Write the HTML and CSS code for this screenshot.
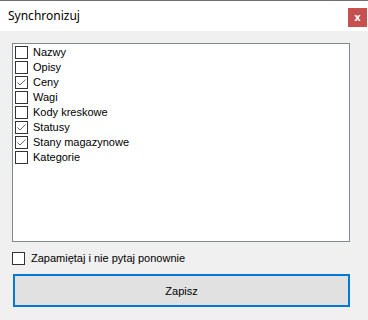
FILE: index.html
```html
<!DOCTYPE html>
<html lang="pl">
<head>
    <meta charset="UTF-8">
    <title>Synchronizuj</title>
    <link rel="stylesheet" href="styles.css">
</head>
<body>
    <div class="window">
        <div class="titlebar">
            <span class="title">Synchronizuj</span>
            <button class="close">x</button>
        </div>
        <div class="content">
            <div class="list">
                <div class="item"><span class="box"></span>Nazwy</div>
                <div class="item"><span class="box"></span>Opisy</div>
                <div class="item"><span class="box checked"><svg viewBox="0 0 11 11"><polyline points="1.5,5.5 4,8 9.5,2.5"/></svg></span>Ceny</div>
                <div class="item"><span class="box"></span>Wagi</div>
                <div class="item"><span class="box"></span>Kody kreskowe</div>
                <div class="item"><span class="box checked"><svg viewBox="0 0 11 11"><polyline points="1.5,5.5 4,8 9.5,2.5"/></svg></span>Statusy</div>
                <div class="item"><span class="box checked"><svg viewBox="0 0 11 11"><polyline points="1.5,5.5 4,8 9.5,2.5"/></svg></span>Stany magazynowe</div>
                <div class="item"><span class="box"></span>Kategorie</div>
            </div>
            <label class="remember"><span class="box"></span>Zapamiętaj i nie pytaj ponownie</label>
            <button class="save">Zapisz</button>
        </div>
    </div>
</body>
</html>
```

FILE: styles.css
```css
body {
    margin: 0;
    font-family: "Liberation Sans", Arial, sans-serif;
    font-size: 11px;
    color: #000;
}

.window {
    width: 368px;
    height: 320px;
    border-top: 1px solid #6f6f6f;
    box-sizing: border-box;
    background: #f0f0f0;
}

.titlebar {
    height: 30px;
    background: #fff;
    display: flex;
    align-items: center;
    justify-content: space-between;
}

.title {
    padding-left: 8px;
    margin-top: -2px;
    font-family: "Noto Sans", sans-serif;
    font-size: 12px;
}

.close {
    width: 19px;
    height: 19px;
    margin-right: 1px;
    margin-top: 2px;
    padding: 0;
    border: none;
    background: #c75050;
    color: #fff;
    font-family: "DejaVu Sans", sans-serif;
    font-weight: bold;
    font-size: 10px;
    line-height: 19px;
}

.content {
    padding: 12px 18px 0 12px;
}

.list {
    height: 199px;
    box-sizing: border-box;
    border: 1px solid #828790;
    background: #fff;
    padding: 1px 0 0 2px;
}

.item {
    height: 15px;
    display: flex;
    align-items: center;
    line-height: 15px;
}

.box {
    width: 13px;
    height: 13px;
    box-sizing: border-box;
    border: 1px solid #333;
    background: #fff;
    margin-right: 5px;
    flex: none;
    display: flex;
}

.box svg {
    width: 11px;
    height: 11px;
    fill: none;
    stroke: #666;
    stroke-width: 1;
}

.remember {
    display: flex;
    align-items: center;
    margin-top: 9px;
    height: 14px;
}

.remember .box {
    margin-right: 6px;
}

.save {
    display: block;
    width: 337px;
    height: 33px;
    margin: 9px 0 0 1px;
    border: 2px solid #0078d7;
    background: #e1e1e1;
    font-family: inherit;
    font-size: 11px;
    color: #000;
    padding: 0;
}
```
